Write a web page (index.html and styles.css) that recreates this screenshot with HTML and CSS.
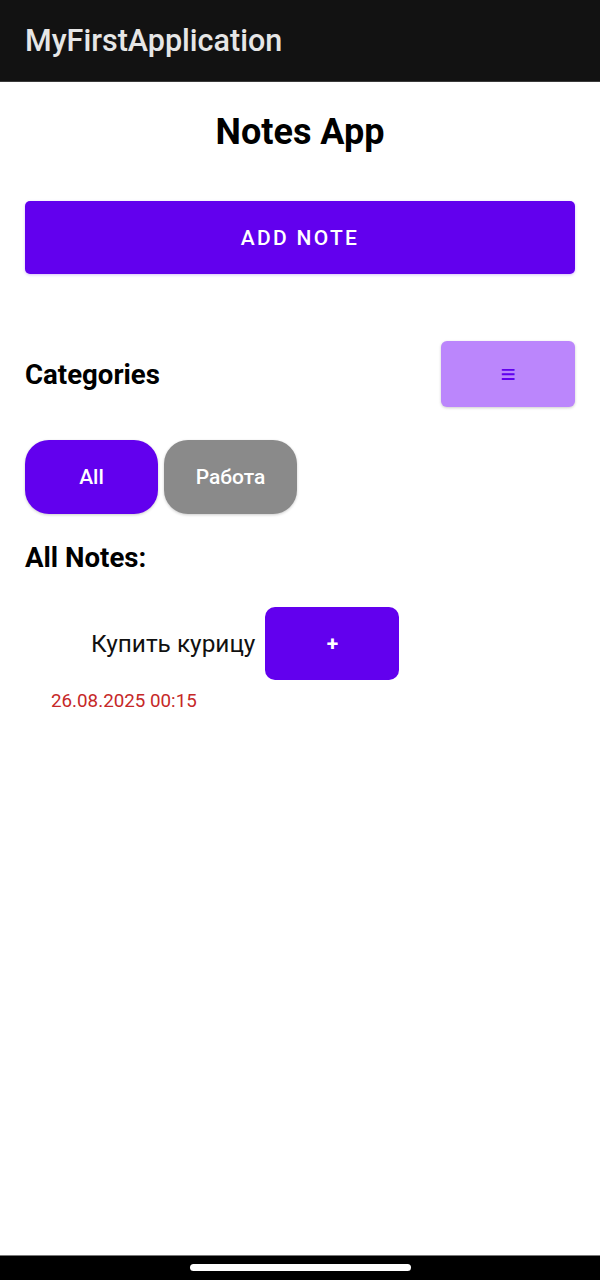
FILE: index.html
```html
<!DOCTYPE html>
<html>
<head>
<meta charset="utf-8">
<link rel="stylesheet" href="styles.css">
</head>
<body>
<div class="screen">
  <header class="appbar"><span class="appbar-title">MyFirstApplication</span></header>
  <main class="content">
    <h1 class="title">Notes App</h1>
    <button class="add-btn">ADD NOTE</button>
    <div class="cat-row">
      <h2 class="section">Categories</h2>
      <button class="menu-btn">≡</button>
    </div>
    <div class="chips">
      <button class="chip chip-active">All</button>
      <button class="chip chip-gray">Работа</button>
    </div>
    <h2 class="section notes-head">All Notes:</h2>
    <div class="note">
      <div class="note-row">
        <span class="note-text">Купить курицу</span>
        <button class="plus-btn">+</button>
      </div>
      <div class="note-date">26.08.2025 00:15</div>
    </div>
  </main>
  <footer class="navbar"><span class="handle"></span></footer>
</div>
</body>
</html>
```
FILE: styles.css
```css
* { box-sizing: border-box; }
html, body { margin: 0; padding: 0; }
body { font-family: Roboto, "Noto Sans", sans-serif; background: #fff; }
.screen { width: 600px; height: 1280px; display: flex; flex-direction: column; }
.appbar {
  height: 82px; background: #121212; border-bottom: 1px solid #3a3a3a;
  display: flex; align-items: center; padding-left: 25px; flex-shrink: 0;
}
.appbar-title { color: #e6e6e6; font-size: 30.5px; font-weight: 500; letter-spacing: 0; }
.content { flex: 1; padding: 0 25px; display: flex; flex-direction: column; }
.title { margin: 29px 0 0; text-align: center; font-size: 36px; font-weight: 700; line-height: 42px; color: #000; }
button { font-family: inherit; border: none; cursor: pointer; }
.add-btn {
  margin-top: 48px; height: 73px; width: 100%; background: #6200ee; color: #fff;
  border-radius: 5px; font-size: 21px; font-weight: 500; letter-spacing: 2.3px;
  padding-left: 6px;
  box-shadow: 0 1px 3px rgba(98,0,238,0.25);
}
.cat-row { margin-top: 67px; display: flex; justify-content: space-between; align-items: center; }
.section { margin: 0; font-size: 27.6px; font-weight: 700; color: #000; }
.menu-btn {
  width: 134px; height: 66px; background: #bb86fc; color: #6200ee;
  border-radius: 6px; font-size: 26px; font-weight: 500;
  box-shadow: 0 1px 3px rgba(0,0,0,0.2);
}
.chips { margin-top: 33px; display: flex; gap: 6px; }
.chip {
  width: 133px; height: 74px; border-radius: 24px; color: #fff;
  font-size: 21px; font-weight: 500; box-shadow: 0 1px 3px rgba(0,0,0,0.2);
}
.chip-active { background: #6200ee; }
.chip-gray { background: #8a8a8a; }
.notes-head { margin-top: 26px; line-height: 36px; }
.note { margin-top: 31px; }
.note-row { display: flex; align-items: center; gap: 10px; padding-left: 66px; }
.note-text { font-size: 24.4px; color: #111; }
.plus-btn {
  width: 134px; height: 73px; background: #6200ee; color: #fff;
  border-radius: 10px; font-size: 21px; font-weight: 700;
}
.note-date { margin-top: 10px; padding-left: 26px; color: #c62828; font-size: 18.8px; }
.navbar {
  height: 25px; background: #000; border-top: 1px solid #777; flex-shrink: 0;
  display: flex; justify-content: center; padding-top: 8px;
}
.handle { width: 221px; height: 7px; background: #fff; border-radius: 4px; }
```
